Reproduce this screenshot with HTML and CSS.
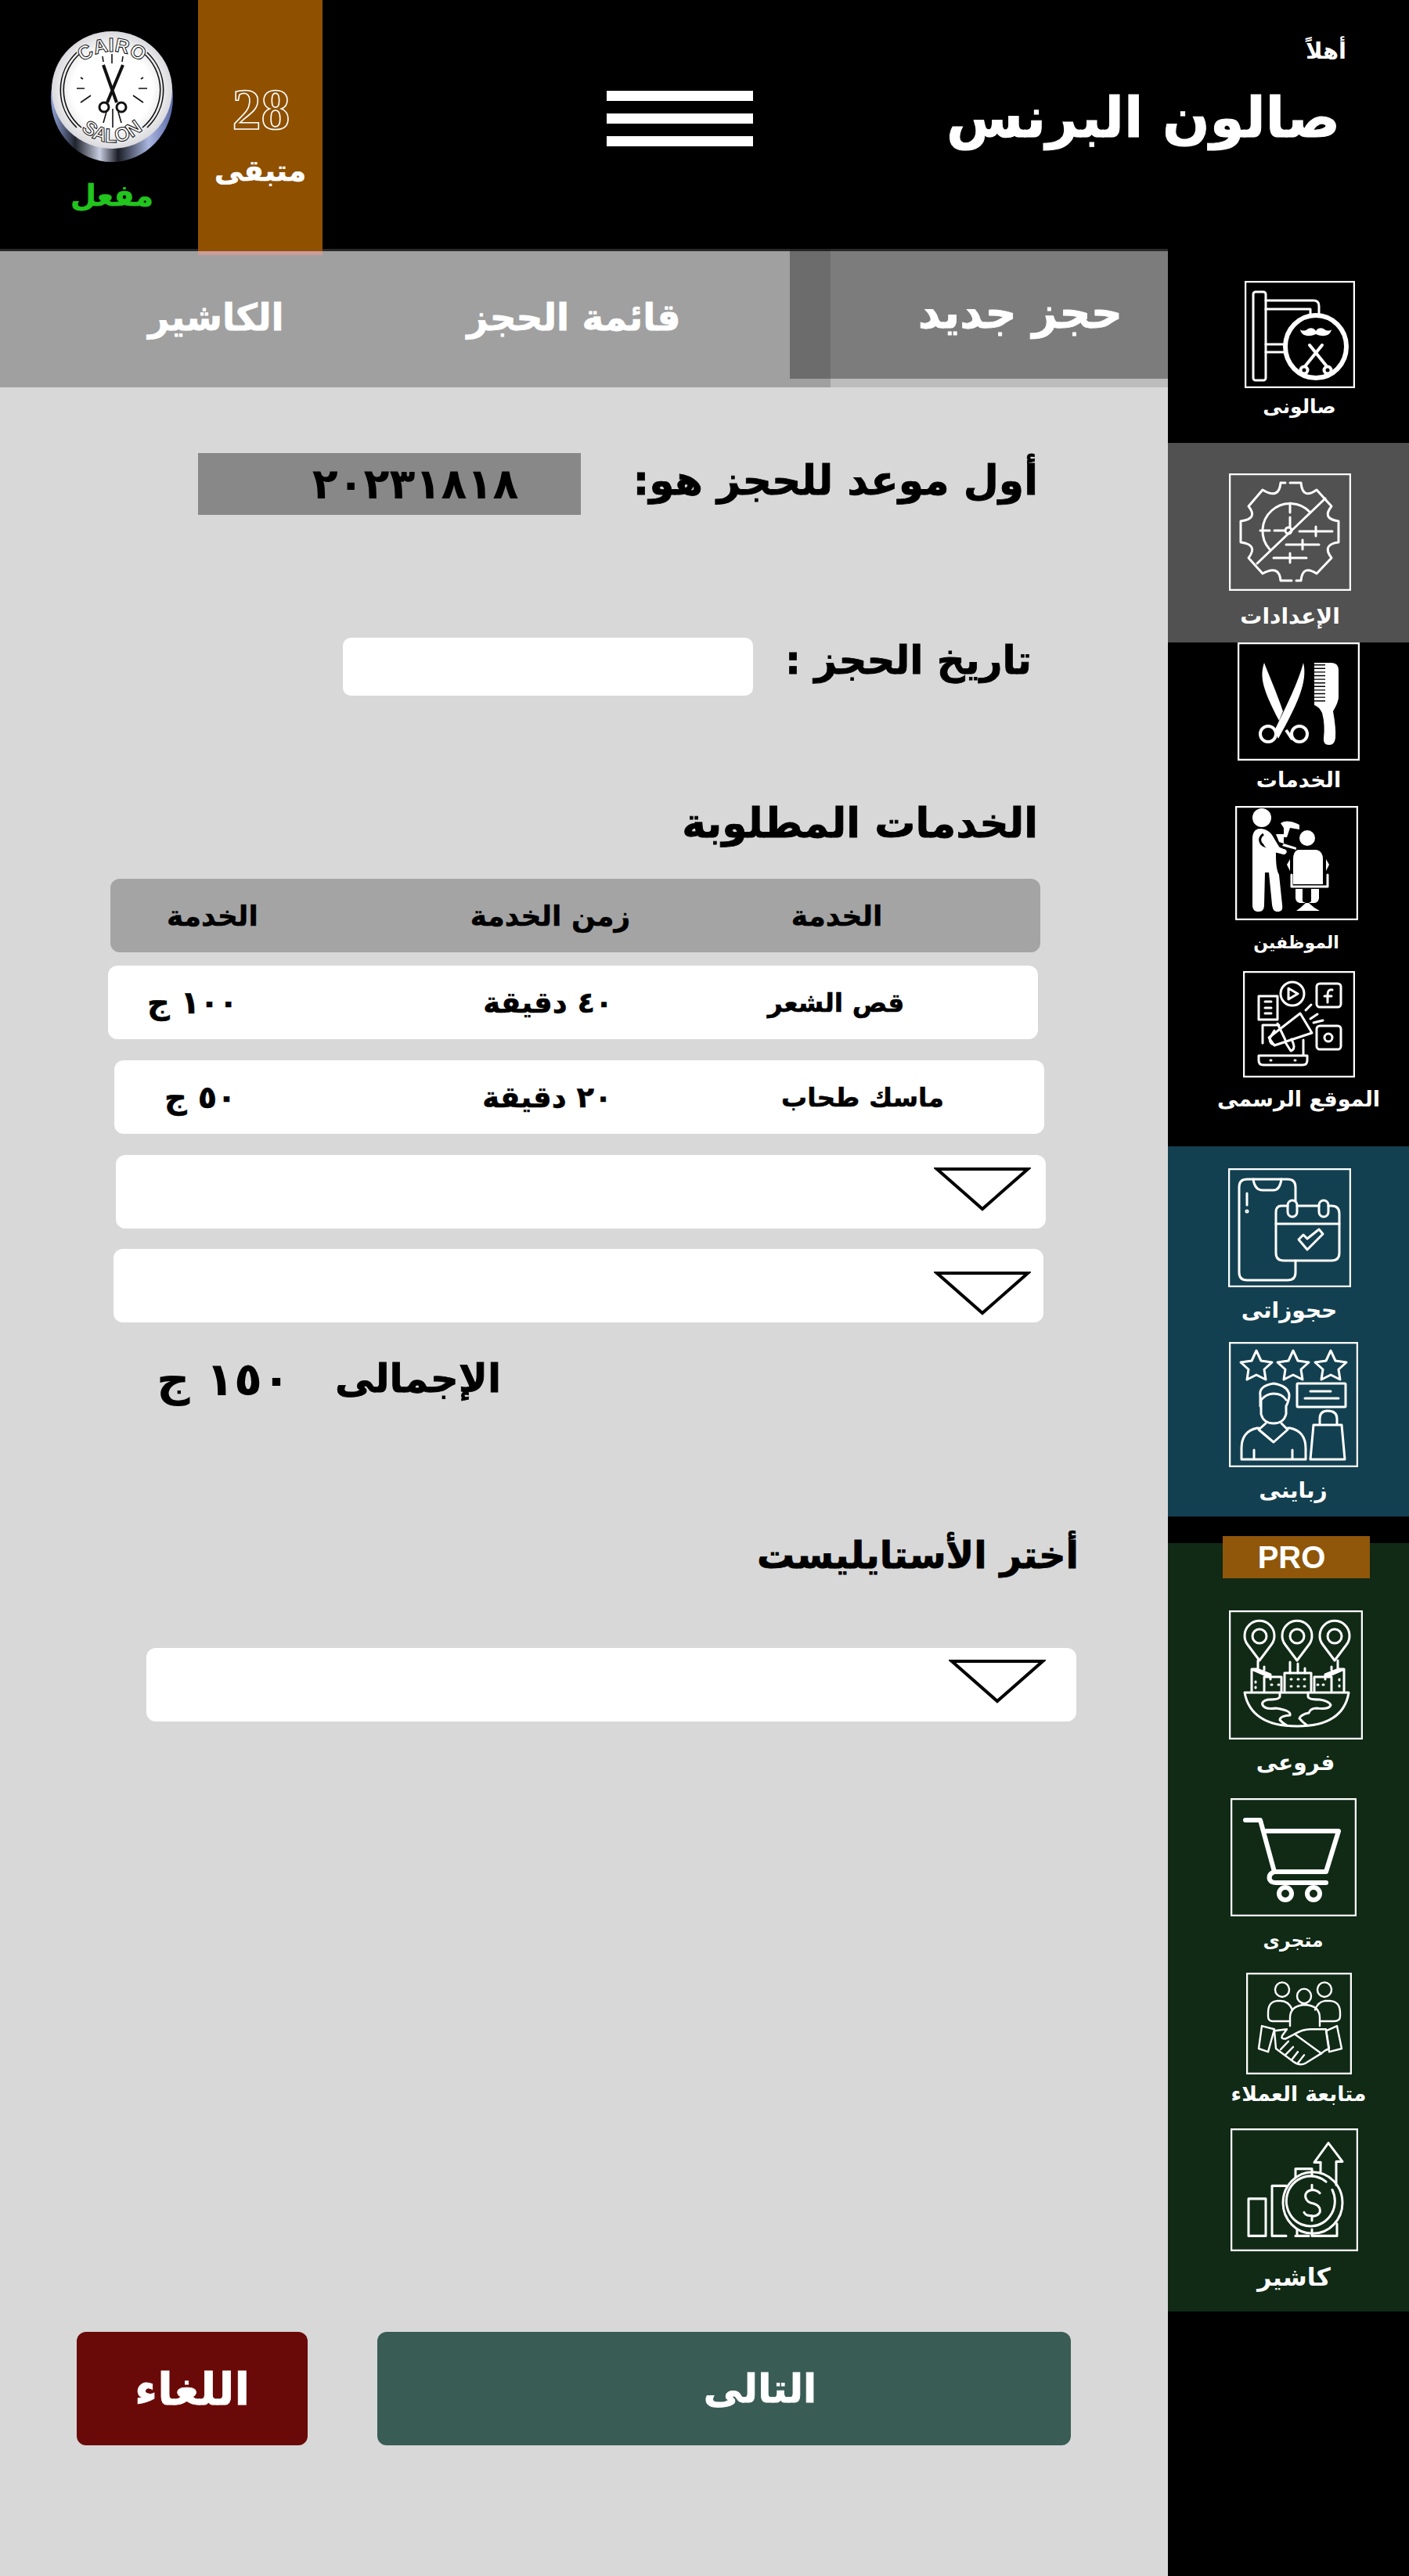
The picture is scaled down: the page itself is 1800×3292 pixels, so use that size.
FILE: index.html
```html
<!DOCTYPE html>
<html lang="ar" dir="rtl">
<head>
<meta charset="utf-8">
<title>صالون البرنس</title>
<link rel="stylesheet" href="styles.css">
</head>
<body>
<div class="page">
  <header class="topbar">
    <div class="welcome">
      <div class="hello">أهلاً</div>
      <div class="salon-name">صالون البرنس</div>
    </div>
    <div class="burger"><span></span><span></span><span></span></div>
    <div class="quota">
      <div class="quota-num" dir="ltr">28</div>
      <div class="quota-label">متبقى</div>
    </div>
    <div class="brand">
      <svg class="logo" viewBox="0 0 156 168" dir="ltr">
        <defs>
          <linearGradient id="chrome" x1="0" x2="1" y1="0" y2="0">
            <stop offset="0" stop-color="#8fa2d8"/><stop offset=".2" stop-color="#20242e"/><stop offset=".4" stop-color="#c8cde0"/><stop offset=".55" stop-color="#1b1d26"/><stop offset=".8" stop-color="#aab6e0"/><stop offset="1" stop-color="#5a6aa8"/>
          </linearGradient>
          <radialGradient id="face" cx=".5" cy=".5" r=".55">
            <stop offset=".6" stop-color="#ffffff"/><stop offset="1" stop-color="#cfcfd4"/>
          </radialGradient>
          <path id="arcTop" d="M24 77 A54 50 0 0 1 132 77"/>
          <path id="arcBot" d="M18 76 A60 67 0 0 0 138 76"/>
        </defs>
        <ellipse cx="78" cy="86" rx="78" ry="82" fill="url(#chrome)"/>
        <ellipse cx="78" cy="76" rx="77" ry="75" fill="url(#face)"/>
        <path class="logo-ring" d="M33 28A66 66 0 0 0 33 124M123 28A66 66 0 0 1 123 124M39 28A62 62 0 0 0 39 124M117 28A62 62 0 0 1 117 124"/>
        <text class="logo-text"><textPath href="#arcTop" startOffset="50%" text-anchor="middle">CAIRO</textPath></text>
        <text class="logo-text"><textPath href="#arcBot" startOffset="50%" text-anchor="middle">SALON</textPath></text>
        <path d="M67 44 L84 92 M92 44 L72 92" class="logo-sc"/>
        <circle cx="68" cy="98" r="6" class="logo-sc-thin"/><circle cx="90" cy="98" r="6" class="logo-sc-thin"/>
        <path d="M78 30V42M66 33l1 7M92 33l-1 7M38 60l3 2M118 60l-3 2M33 74H43M112 74H123M38 92l13-9M118 92l-13-9M67 118l4-14M90 118l-4-14M79 124V100" class="logo-ray"/>
      </svg>
      <div class="brand-status">مفعل</div>
    </div>
  </header>

  <main class="main">
    <nav class="tabs">
      <div class="tab tab-active">حجز جديد</div>
      <div class="tab tab-list">قائمة الحجز</div>
      <div class="tab tab-cash">الكاشير</div>
    </nav>

    <section class="first-row">
      <div class="first-label">أول موعد للحجز هو:</div>
      <div class="first-date">٢٠٢٣١٨١٨</div>
    </section>

    <section class="date-row">
      <div class="date-label">تاريخ الحجز :</div>
      <div class="date-input"></div>
    </section>

    <h2 class="services-title">الخدمات المطلوبة</h2>

    <div class="svc svc-head">
      <span>الخدمة</span><span>زمن الخدمة</span><span>الخدمة</span>
    </div>
    <div class="svc svc-white svc-one">
      <span>قص الشعر</span><span>٤٠ دقيقة</span><span>١٠٠ ج</span>
    </div>
    <div class="svc svc-white svc-two">
      <span>ماسك طحاب</span><span>٢٠ دقيقة</span><span>٥٠ ج</span>
    </div>
    <div class="select select-three">
      <svg class="caret" viewBox="0 0 124 56"><path d="M4 2H120L62 53Z"/></svg>
    </div>
    <div class="select select-four">
      <svg class="caret" viewBox="0 0 124 56"><path d="M4 2H120L62 53Z"/></svg>
    </div>

    <div class="total">
      <span class="total-label">الإجمالى</span><span class="total-value">١٥٠ ج</span>
    </div>

    <h2 class="stylist-title">أختر الأستايليست</h2>
    <div class="select select-stylist">
      <svg class="caret" viewBox="0 0 124 56"><path d="M4 2H120L62 53Z"/></svg>
    </div>

    <div class="actions">
      <div class="btn btn-next">التالى</div>
      <div class="btn btn-cancel">اللغاء</div>
    </div>
  </main>

  <aside class="side" dir="rtl">
    <div class="nav-item nav-salon">
      <svg class="nav-icon" width="141" height="137" viewBox="0 0 141 137">
        <rect class="frame" x="1" y="1" width="139" height="135"/>
        <g class="ic">
          <rect x="11" y="14" width="16" height="113" rx="3"/>
          <path d="M27 25H88Q95 25 95 32V42M27 36H84V42M27 81H50M27 91H50"/>
          <ellipse cx="91" cy="84" rx="39" ry="40" class="ic-thick"/>
        </g>
        <path class="ic-fill" d="M91 64c-3-5-9-4-11-2-3 2-7 2-9 0 1 7 9 11 20 6 11 5 19 1 20-6-2 2-6 2-9 0-2-2-8-3-11 2z"/>
        <path class="ic ic-heavy" d="M78 108 L99 82M104 108L83 82"/>
        <circle class="ic ic-heavy" cx="76" cy="114" r="4.5"/><circle class="ic ic-heavy" cx="106" cy="114" r="4.5"/>
      </svg>
      <div class="nav-label label-salon">صالونى</div>
    </div>

    <div class="nav-block nav-block-settings">
      <div class="nav-item nav-settings">
        <svg class="nav-icon" width="156" height="150" viewBox="0 0 156 150">
          <rect class="frame" x="1" y="1" width="154" height="148"/>
          <g class="ic">
            <path d="M72 12H66Q64 34 43 21L25 42Q38 58 15 61V88Q38 91 25 108L43 128Q64 116 66 137H80M86 137H92Q94 116 112 128L131 108Q118 91 140 88V61Q118 58 131 42L112 21Q94 34 92 12H78"/>
            <path d="M36 115L123 32"/>
            <path d="M104 50A35 35 0 1 0 52 97"/>
            <path d="M78 38V50M78 56V68M40 73H52M58 73H70"/>
            <circle cx="76" cy="73" r="4"/>
            <path d="M90 74H132M111 68V80M73 91H115M94 85V97M57 108H99M78 102V114"/>
          </g>
        </svg>
        <div class="nav-label">الإعدادات</div>
      </div>
    </div>

    <div class="nav-item nav-services">
      <svg class="nav-icon" width="156" height="151" viewBox="0 0 156 151">
        <rect class="frame" x="1" y="1" width="154" height="149"/>
        <path class="ic-fill" d="M34 26C28 44 32 60 53 100L58 88C50 64 40 42 34 26Z"/>
        <path class="ic-fill" d="M84 26C90 50 76 80 52 123L47 113C62 82 78 50 84 26Z"/>
        <circle class="ic-ring" cx="39" cy="117" r="10"/><circle class="ic-ring" cx="79" cy="117" r="10"/>
        <path class="ic-ring" d="M62 112L70 124"/>
        <path class="ic-fill" d="M98 26H120Q129 26 129 36V70Q129 76 122 88Q126 110 125 122Q124 131 117 131Q109 131 110 122Q112 105 108 90Q104 82 98 80Z"/>
        <path class="ic-comb" d="M105 28V76"/>
      </svg>
      <div class="nav-label label-services">الخدمات</div>
    </div>

    <div class="nav-item nav-staff">
      <svg class="nav-icon" width="157" height="146" viewBox="0 0 157 146">
        <rect class="frame" x="1" y="1" width="155" height="144"/>
        <circle class="ic-fill" cx="34" cy="15" r="12"/>
        <path class="ic-fill" d="M32 29C24 29 22 36 22 42V126C22 134 26 135 30 135C35 135 37 132 37 126L38 85H43L47 126C48 133 50 135 54 135C59 135 61 133 60 126L56 88C52 80 52 70 52 58L62 62 L50 42C46 34 40 29 32 29Z"/>
        <path d="M36 36C28 42 32 50 40 52L62 60" class="ic-bg"/>
        <path class="ic-fill" d="M36 44C34 52 44 58 54 60L62 62C66 62 68 56 62 55L50 50C46 46 42 42 36 44Z"/>
        <path class="ic-fill" d="M52 36H62V48L56 46Z"/>
        <path class="ic-fill" d="M58 22C66 16 78 22 82 24V30L70 28L66 40H62V28Z"/>
        <path class="ic-fill" d="M62 48L78 53V56L60 51Z"/>
        <circle class="ic-fill" cx="92" cy="41" r="10"/>
        <path class="ic-fill" d="M80 56H104Q112 58 112 68V100H74V68Q74 58 80 56Z"/>
        <path class="ic-fill" d="M70 68L66 75L70 83ZM116 68L120 75L116 83Z"/>
        <path class="ic" d="M72 88V103H118V88"/>
        <path class="ic-fill" d="M77 106H86V122L90 124H84Q78 124 77 118ZM97 106H107V118Q106 124 100 124H94L97 122ZM78 134Q84 130 90 124H94Q100 130 108 134Z"/>
      </svg>
      <div class="nav-label label-staff">الموظفين</div>
    </div>

    <div class="nav-item nav-site">
      <svg class="nav-icon" width="143" height="136" viewBox="0 0 143 136">
        <rect class="frame" x="1" y="1" width="141" height="134"/>
        <g class="ic">
          <circle cx="63" cy="29" r="15"/><path d="M58 22L70 29L58 36Z"/>
          <rect x="94" y="16" width="31" height="30" rx="4"/><path d="M114 24Q108 23 108 30V40M104 32H113"/>
          <rect x="94" y="70" width="31" height="30" rx="4"/><circle cx="109" cy="85" r="5"/>
          <rect x="20" y="32" width="24" height="30"/><path d="M28 39H36M28 47H36M28 54H36"/>
          <path d="M25 92V69H46M77 88V108M20 108H82V114Q82 120 76 120H26Q20 120 20 114ZM35 114H36M66 114H67"/>
          <path d="M73 54L88 79L40 95L33 85Z"/>
          <path d="M44 67L54 88M40 76L34 86Q34 93 40 94"/>
          <path d="M54 91L61 102Q67 100 64 92L62 87"/>
          <path d="M80 50L87 43M86 61L95 55M90 66L102 63"/>
        </g>
      </svg>
      <div class="nav-label label-site">الموقع الرسمى</div>
    </div>

    <div class="nav-block nav-block-teal">
      <div class="nav-item nav-bookings">
        <svg class="nav-icon" width="157" height="152" viewBox="0 0 157 152">
          <rect class="frame" x="1" y="1" width="155" height="150"/>
          <g class="ic">
            <path d="M86 42V24Q86 14 76 14H24Q14 14 14 24V133Q14 143 24 143H76Q86 143 86 133V118"/>
            <path d="M32 14Q34 28 44 28H58Q66 28 68 14"/>
            <path d="M24 32V47"/><circle cx="24" cy="55" r="1"/>
            <path d="M76 48H68Q61 48 61 56V108Q61 118 71 118H132Q142 118 142 108V58Q142 48 132 48H128M116 48H88"/>
            <rect x="76" y="41" width="12" height="21" rx="6"/><rect x="116" y="41" width="12" height="21" rx="6"/>
            <path d="M61 71H142"/>
            <path d="M90 91L96 85L101 90L116 78L121 84L101 104Z"/>
          </g>
        </svg>
        <div class="nav-label">حجوزاتى</div>
      </div>
      <div class="nav-item nav-customers">
        <svg class="nav-icon" width="165" height="160" viewBox="0 0 165 160">
          <rect class="frame" x="1" y="1" width="163" height="158"/>
          <g class="ic">
            <path d="M35 11L41 24L55 26L45 35L47 48L35 42L23 48L25 35L15 26L29 24Z"/>
            <path d="M82 11L88 24L102 26L92 35L94 48L82 42L70 48L72 35L62 26L76 24Z"/>
            <path d="M130 11L136 24L150 26L140 35L142 48L130 42L118 48L120 35L110 26L124 24Z"/>
            <rect x="87" y="53" width="62" height="30" rx="1"/>
            <path d="M104 63H130M97 72H140"/>
            <path d="M40 82V68Q38 56 57 53Q76 56 77 68Q77 74 73 82V92Q70 104 57 104Q44 104 41 92V74Q48 66 57 66Q68 66 73 74"/>
            <path d="M47 104L38 112L57 128L75 112L67 104"/>
            <path d="M38 110H36Q16 114 16 136V150H98V136Q98 114 78 110H75M32 150V138M81 150V138"/>
            <path d="M108 106H144L148 150H104ZM116 106V98Q116 88 126 88Q138 88 138 98V106"/>
          </g>
        </svg>
        <div class="nav-label">زباينى</div>
      </div>
    </div>

    <div class="nav-block nav-block-green">
      <div class="pro-tag" dir="ltr">PRO</div>
      <div class="nav-item nav-branches">
        <svg class="nav-icon" width="171" height="165" viewBox="0 0 171 165">
          <rect class="frame" x="1" y="1" width="169" height="163"/>
          <g class="ic">
            <path d="M39 64L24 44A19 19 0 1 1 54 44Z"/><circle cx="39" cy="33" r="9"/>
            <path d="M87 64L72 44A19 19 0 1 1 102 44Z"/><circle cx="87" cy="33" r="9"/>
            <path d="M135 64L120 44A19 19 0 1 1 150 44Z"/><circle cx="135" cy="33" r="9"/>
            <path d="M29 103V75L52 85M29 75H37V64M38 76L53 82V88M45 72V76"/>
            <path d="M45 103V85H67V103M71 103V80H105V103M109 103V85H131V103M147 103V75L124 85M147 75H139V64M138 76L123 82V88M131 72V76"/>
            <path d="M78 80V66M88 80V68M97 80V74"/>
            <path d="M34 91V92M34 98V99M54 95H55M63 95H64M79 88H80M88 88H89M96 88H97M79 97H80M88 97H89M96 97H97M120 95H121M113 95H114M141 88V89M141 96V97"/>
            <path d="M20 105H153Q146 148 87 148Q28 148 20 105Z"/>
            <path d="M65 105V110Q65 114 50 114Q41 116 43 121Q46 127 60 125Q80 128 78 134Q65 135 65 140Q68 144 74 147"/>
            <path d="M101 105V110Q101 114 116 114Q128 116 130 121Q128 127 112 125Q104 125 102 131Q92 133 90 138Q95 144 100 147"/>
          </g>
        </svg>
        <div class="nav-label">فروعى</div>
      </div>
      <div class="nav-item nav-cart">
        <svg class="nav-icon" width="161" height="151" viewBox="0 0 161 151">
          <rect class="frame" x="1" y="1" width="159" height="149"/>
          <g class="ic ic-cart">
            <path d="M19 28H38L56 94H122L138 42H42"/>
            <path d="M56 94Q48 97 50 104Q52 108 58 108H122"/>
            <circle cx="70" cy="122" r="8"/><circle cx="106" cy="122" r="8"/>
          </g>
        </svg>
        <div class="nav-label label-cart">متجرى</div>
      </div>
      <div class="nav-item nav-follow">
        <svg class="nav-icon" width="135" height="130" viewBox="0 0 135 126" preserveAspectRatio="none">
          <rect class="frame" x="1" y="1" width="133" height="124"/>
          <g class="ic ic-thin">
            <circle cx="46" cy="21" r="9"/><circle cx="100" cy="21" r="9"/><circle cx="74" cy="29" r="9"/>
            <path d="M59 46Q54 35 44 35H39Q28 36 28 50V54Q28 60 34 60H56M95 60H112Q120 60 120 54V50Q120 36 108 35H100Q92 36 88 46"/>
            <path d="M56 66V56Q56 42 72 40H78Q94 42 94 56V66"/>
            <path d="M20 66L36 70L28 98L16 94ZM102 72L116 66L122 94L106 98Z"/>
            <path d="M36 72L52 70L46 78Q44 82 50 82L62 76Q72 70 82 70H102L106 94Q100 96 96 100L76 112Q68 116 60 110L38 94Z"/>
            <path d="M62 76L96 100M44 95L54 85M50 102L60 92M58 108L66 98M66 112L74 102"/>
          </g>
        </svg>
        <div class="nav-label label-follow">متابعة العملاء</div>
      </div>
      <div class="nav-item nav-cashier">
        <svg class="nav-icon" width="163" height="157" viewBox="0 0 163 152" preserveAspectRatio="none">
          <rect class="frame" x="1" y="1" width="161" height="150"/>
          <g class="ic">
            <rect x="23" y="87" width="22" height="46"/>
            <path d="M71 133H53V71H71"/>
            <path d="M83 60V50H104V58M85 133V125M104 125V133H136V118M83 133H100M115 42V55M135 42V70"/>
            <path d="M115 42H107L125 18L143 41H135"/>
            <circle cx="105" cy="92" r="38"/>
            <path d="M122 66A31 31 0 1 0 130 76"/>
            <path d="M114 80Q110 76 104 76Q94 78 96 86Q98 92 106 93Q116 96 114 104Q110 110 102 108Q96 108 94 104M104 70V76M104 108V114"/>
          </g>
        </svg>
        <div class="nav-label label-cashier">كاشير</div>
      </div>
    </div>
  </aside>
</div>
</body>
</html>
```
FILE: styles.css
```css
* { box-sizing: border-box; }
html, body { margin: 0; padding: 0; }
body { font-family: "DejaVu Sans", sans-serif; font-weight: 700; color: #000; background: #000; }
.page { width: 1800px; height: 3292px; display: grid; grid-template-columns: 1492px 308px; grid-template-rows: 318px 1fr; overflow: hidden; background: #000; direction: ltr; }

/* top bar */
.topbar { grid-column: 1 / 3; grid-row: 1; direction: rtl; display: flex; align-items: flex-start; height: 318px; padding-right: 80px; background: #000; color: #fff; position: relative; z-index: 3; }
.welcome { flex: 0 0 758px; padding-top: 47px; }
.hello { font-size: 29px; line-height: 36px; }
.salon-name { font-size: 71px; line-height: 92px; margin-top: 22px; margin-right: 8px; -webkit-text-stroke: 1px #fff; }
.burger { flex: 0 0 187px; display: flex; flex-direction: column; margin-top: 116px; }
.burger span { display: block; height: 13px; background: #fff; margin-bottom: 16px; }
.quota { flex: 0 0 159px; margin-right: 363px; height: 326px; background: #8f5000; text-align: center; position: relative; }
.quota::after { content: ""; position: absolute; left: 0; right: 0; top: 321px; height: 5px; background: #cc9c9c; }
.quota-num { font-family: "Liberation Serif", serif; font-weight: 700; font-size: 74px; line-height: 60px; margin-top: 110px; margin-right: -2px; color: #8f5000; -webkit-text-stroke: 1.6px #fff; }
.quota-label { font-size: 37px; line-height: 46px; margin-top: 26px; -webkit-text-stroke: .6px #fff; }
.brand { flex: 0 0 156px; margin-right: 32px; margin-top: 39px; text-align: center; }
.logo { display: block; width: 156px; height: 168px; }
.logo-ring { fill: none; stroke: #111; stroke-width: 1.6; }
.logo-text { font-family: "Liberation Sans", sans-serif; font-weight: 700; font-size: 25px; fill: #fff; stroke: #111; stroke-width: 1; }
.logo-sc { fill: none; stroke: #111; stroke-width: 4; }
.logo-sc-thin { fill: none; stroke: #111; stroke-width: 3; }
.logo-ray { fill: none; stroke: #111; stroke-width: 1.6; }
.brand-status { color: #22c41e; font-size: 38px; line-height: 50px; margin-top: 18px; -webkit-text-stroke: .6px #22c41e; }

/* main column */
.main { grid-column: 1; grid-row: 2; direction: rtl; background: #d8d8d8; border-top: 3px solid #2a2a2a; display: flex; flex-direction: column; min-height: 0; }
.tabs { display: flex; height: 174px; background: #a0a0a0; color: #fff; flex: none; }
.tab { display: flex; align-items: center; justify-content: center; font-size: 47px; padding-bottom: 6px; height: 174px; -webkit-text-stroke: .8px #fff; }
.tab-active { flex: 0 0 483px; height: 163px; background: #7c7c7c; position: relative; justify-content: flex-start; padding-right: 58px; font-size: 56px; }
.tab-active::before { content: ""; position: absolute; left: 0; top: -3px; bottom: 0; width: 52px; background: rgba(0,0,0,.12); }
.tab-active::after { content: ""; position: absolute; left: 52px; right: 0; top: 100%; height: 11px; background: #bcbcbc; }
.tab-list { flex: 0 0 552px; }
.tab-cash { flex: 0 0 362px; }

.first-row { display: flex; align-items: center; margin: 84px 166px 0 0; height: 79px; }
.first-label { flex: 0 0 584px; font-size: 52px; line-height: 70px; padding-bottom: 10px; -webkit-text-stroke: .8px #000; }
.first-date { flex: 0 0 489px; height: 79px; background: #888; display: flex; align-items: center; justify-content: center; font-size: 54px; font-weight: 700; padding-left: 66px; }

.date-row { display: flex; align-items: center; margin: 157px 174px 0 0; height: 74px; }
.date-label { flex: 0 0 356px; font-size: 50px; line-height: 70px; padding-bottom: 16px; -webkit-text-stroke: .8px #000; }
.date-input { flex: 0 0 524px; height: 74px; background: #fff; border-radius: 10px; }

.services-title { font-size: 52px; line-height: 70px; margin: 128px 166px 36px 0; font-weight: 700; -webkit-text-stroke: .8px #000; }

.svc { display: grid; align-items: center; height: 94px; width: 1188px; border-radius: 12px; font-size: 33px; }
.svc span { -webkit-text-stroke: .5px #000; }
.svc span:nth-child(1), .svc span:nth-child(2) { text-align: center; }
.svc span:nth-child(2) { font-size: 37px; }
.svc span:nth-child(3) { text-align: left; font-size: 40px; }
.svc-head { margin: 0 163px 0 0; background: #a4a4a4; grid-template-columns: 520px 212px 1fr; font-size: 36px; }
.svc-head span:nth-child(2) { font-size: 36px; }
.svc-head span:nth-child(3) { padding-left: 72px; font-size: 36px; }
.svc-white { background: #fff; }
.svc-one { margin: 17px 166px 0 0; grid-template-columns: 516px 220px 1fr; }
.svc-one span:nth-child(3) { padding-left: 50px; }
.svc-two { margin: 27px 158px 0 0; grid-template-columns: 464px 342px 1fr; }
.svc-two span:nth-child(3) { padding-left: 64px; }

.select { display: flex; align-items: flex-start; height: 94px; width: 1188px; background: #fff; border-radius: 12px; }
.caret { width: 124px; height: 56px; display: block; fill: none; stroke: #000; stroke-width: 4; }
.select-three { margin: 27px 156px 0 0; padding: 16px 19px 0 0; }
.select-four { margin: 26px 159px 0 0; padding: 29px 16px 0 0; }
.select-stylist { margin: 84px 117px 0 0; padding: 15px 39px 0 0; }

.total { display: flex; justify-content: flex-end; align-items: center; gap: 57px; margin-top: 41px; height: 62px; padding-left: 200px; }
.total-label { font-size: 50px; -webkit-text-stroke: .8px #000; }
.total-value { font-size: 59px; }

.stylist-title { font-size: 48px; line-height: 70px; margin: 159px 114px 0 0; font-weight: 700; -webkit-text-stroke: .8px #000; }

.actions { margin: auto 124px 167px 0; display: flex; gap: 89px; color: #fff; }
.btn { height: 145px; border-radius: 12px; display: flex; align-items: center; justify-content: center; -webkit-text-stroke: .8px #fff; }
.btn-next { flex: 0 0 886px; background: #395c55; font-size: 50px; padding-left: 92px; }
.btn-cancel { flex: 0 0 295px; background: #6a0a08; font-size: 57px; }

/* side rail */
.side { grid-column: 2; grid-row: 2; direction: rtl; background: #000; color: #fff; display: flex; flex-direction: column; min-height: 0; padding-top: 3px; }
.nav-item { display: flex; flex-direction: column; align-items: center; }
.nav-icon { display: block; flex: none; }
.frame { fill: none; stroke: #fff; stroke-width: 2.5; }
.ic { fill: none; stroke: #fff; stroke-width: 3; stroke-linecap: round; stroke-linejoin: round; }
.ic-thick { stroke-width: 6; }
.ic-heavy { stroke-width: 4; }
.ic-thin { stroke-width: 2.4; }
.ic-cart { stroke-width: 6; }
.ic-fill { fill: #fff; stroke: none; }
.ic-ring { fill: none; stroke: #fff; stroke-width: 4; }
.ic-comb { fill: none; stroke: #000; stroke-width: 14; stroke-dasharray: 1.4 3.2; }
.ic-bg { fill: none; stroke: #000; stroke-width: 3; }
.nav-label { font-size: 28px; line-height: 30px; white-space: nowrap; }
.label-salon { font-size: 25px; }
.label-services { font-size: 27px; }
.label-staff { font-size: 22px; }
.label-site { font-size: 27px; }
.label-cart { font-size: 23.5px; }
.label-follow { font-size: 26.5px; }
.label-cashier { font-size: 31.5px; }

.nav-salon { padding: 38px 0 0 28px; }
.nav-salon .nav-label { margin-top: 9px; }
.nav-block { flex: none; position: relative; }
.nav-block-settings { background: #515151; height: 255px; margin-top: 31px; }
.nav-settings { padding: 39px 0 0 4px; }
.nav-settings .nav-label { margin-top: 18px; }
.nav-services { padding-left: 26px; }
.nav-services .nav-label { margin-top: 10px; }
.nav-staff { padding: 18px 0 0 20px; }
.nav-staff .nav-label { margin-top: 14px; }
.nav-site { padding: 21px 0 0 26px; }
.nav-site .nav-label { margin-top: 13px; }
.nav-block-teal { background: #134050; height: 473px; margin-top: 45px; }
.nav-bookings { padding: 28px 0 0 2px; }
.nav-bookings .nav-label { margin-top: 15px; }
.nav-customers { padding: 25px 0 0 12px; }
.nav-customers .nav-label { margin-top: 15px; }
.nav-block-green { background: #102a16; height: 982px; margin-top: 34px; }
.pro-tag { position: absolute; top: -9px; left: 70px; width: 188px; height: 54px; background: rgba(150,90,10,.96); font-family: "Liberation Sans", sans-serif; font-size: 40px; line-height: 54px; text-align: center; padding-right: 12px; }
.nav-branches { padding: 86px 0 0 18px; }
.nav-branches .nav-label { margin-top: 15px; }
.nav-cart { padding: 30px 0 0 12px; }
.nav-cart .nav-label { margin-top: 16px; }
.nav-follow { padding: 26px 0 0 26px; }
.nav-follow .nav-label { margin-top: 10px; }
.nav-cashier { padding: 29px 0 0 14px; }
.nav-cashier .nav-label { margin-top: 18px; }
```
